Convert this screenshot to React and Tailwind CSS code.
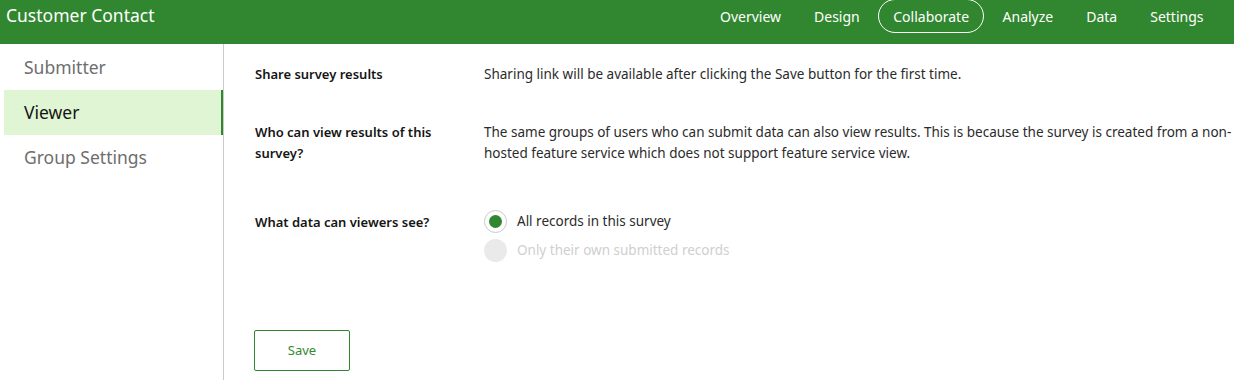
export default function App() {
  const font = { fontFamily: '"Noto Sans", "Open Sans", sans-serif' };
  const nav = ["Overview", "Design", "Collaborate", "Analyze", "Data", "Settings"];
  return (
    <div className="w-[1234px] h-[380px] bg-white overflow-hidden flex flex-col" style={font}>
      <header className="h-[44px] bg-[#31872f] flex items-start justify-between text-white">
        <div className="pl-[6px] pt-[3px] text-[17.5px] leading-[24px]">Customer Contact</div>
        <nav className="flex items-start pr-[14px]">
          {nav.map((n) => (
            <div
              key={n}
              className={
                n === "Collaborate"
                  ? "h-[34px] px-[14px] mx-[2px] border border-white rounded-full flex items-center text-[14px] -mt-[1px]"
                  : "h-[33px] px-[16.5px] flex items-center text-[14px]"
              }
            >
              {n}
            </div>
          ))}
        </nav>
      </header>
      <div className="flex flex-1">
        <aside className="w-[224px] border-r border-[#cacaca] pt-[1px]">
          <div className="h-[45px] pl-[24px] flex items-center text-[17.5px] text-[#6e6e6e]">Submitter</div>
          <div className="h-[45px] ml-[4px] pl-[20px] flex items-center text-[17.5px] text-[#151515] bg-[#dff5d3] border-r-2 border-[#31872f]">Viewer</div>
          <div className="h-[45px] pl-[24px] flex items-center text-[17.5px] text-[#6e6e6e]">Group Settings</div>
        </aside>
        <main className="flex-1 pl-[31px] pt-[20px] text-[13px] text-[#151515]">
          <div className="flex">
            <div className="w-[229px] font-semibold leading-[21px]">Share survey results</div>
            <div className="flex-1 leading-[21px] text-[13.5px] text-[#2b2b2b]">Sharing link will be available after clicking the Save button for the first time.</div>
          </div>
          <div className="flex mt-[37px]">
            <div className="w-[229px] font-semibold leading-[21px] pr-[30px]">Who can view results of this survey?</div>
            <div className="flex-1 leading-[21px] text-[13.5px] text-[#2b2b2b]">The same groups of users who can submit data can also view results. This is because the survey is created from a non-hosted feature service which does not support feature service view.</div>
          </div>
          <div className="flex mt-[45px]">
            <div className="w-[229px] font-semibold leading-[21px] pt-[3px]">What data can viewers see?</div>
            <div className="flex flex-col gap-[6px] pt-[1px]">
              <div className="flex items-center gap-[10px]">
                <div className="w-[23px] h-[23px] rounded-full border border-[#cacaca] bg-white flex items-center justify-center">
                  <div className="w-[13px] h-[13px] rounded-full bg-[#31872f]"></div>
                </div>
                <span className="text-[13.5px] text-[#2b2b2b]">All records in this survey</span>
              </div>
              <div className="flex items-center gap-[10px]">
                <div className="w-[23px] h-[23px] rounded-full bg-[#eaeaea]"></div>
                <span className="text-[13.5px] text-[#cfcfcf]">Only their own submitted records</span>
              </div>
            </div>
          </div>
          <button className="mt-[68px] -ml-[1px] w-[96px] h-[41px] border border-[#31872f] rounded-[2px] text-[#31872f] text-[13px] bg-white">Save</button>
        </main>
      </div>
    </div>
  );
}
